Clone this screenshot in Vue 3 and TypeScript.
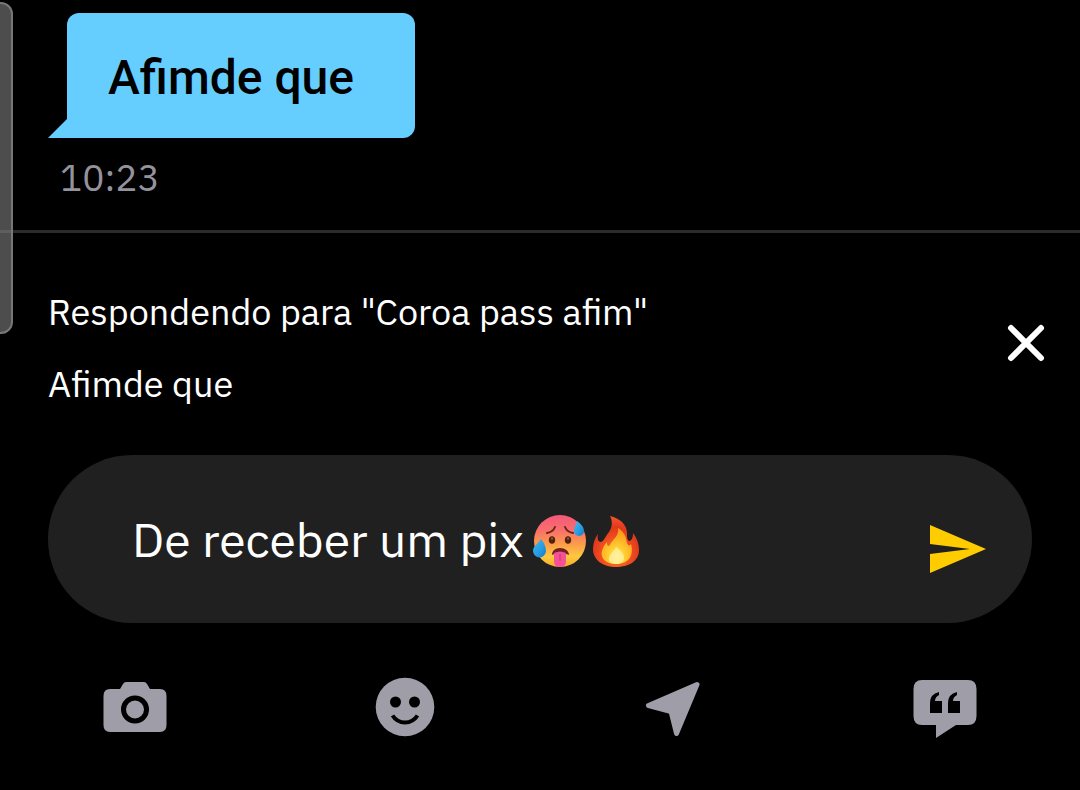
<script setup lang="ts">
import { ref } from 'vue'

const message = ref('Afimde que')
const time = ref('10:23')
const replyTo = ref('Coroa pass afim')
const replying = ref(true)
const draft = ref('De receber um pix')
</script>

<template>
  <main class="chat">
    <div class="scroll-thumb" aria-hidden="true"></div>

    <section class="thread">
      <div class="bubble">
        <svg class="tail" viewBox="0 0 20 20" aria-hidden="true"><path d="M20 0 0 20H20Z" /></svg>
        <p class="message">{{ message }}</p>
      </div>
      <time class="time">{{ time }}</time>
    </section>

    <section v-if="replying" class="reply">
      <div class="reply-text">
        <p>Respondendo para "{{ replyTo }}"</p>
        <p>{{ message }}</p>
      </div>
      <button class="close" type="button" aria-label="Fechar" @click="replying = false">
        <svg width="42" height="42" viewBox="0 0 42 42"><path d="M6 6 36 36M36 6 6 36" fill="none" stroke="#fff" stroke-width="6" stroke-linecap="round" /></svg>
      </button>
    </section>

    <form class="composer" @submit.prevent>
      <div class="field">
        <input v-model="draft" class="draft" type="text" aria-label="Mensagem" />
        <svg class="emoji" width="56" height="56" viewBox="0 0 56 56" role="img" aria-label="🥵">
          <defs>
            <linearGradient id="hot-face" x1="0" y1="0" x2="0" y2="1">
              <stop offset="0" stop-color="#f4587a" />
              <stop offset=".3" stop-color="#f9706b" />
              <stop offset=".55" stop-color="#fb9b4a" />
              <stop offset=".8" stop-color="#fdc940" />
              <stop offset="1" stop-color="#f5a92c" />
            </linearGradient>
            <linearGradient id="hot-drop" x1="0" y1="0" x2="1" y2="1">
              <stop offset="0" stop-color="#45b9ee" />
              <stop offset=".6" stop-color="#269be0" />
              <stop offset="1" stop-color="#1478c8" />
            </linearGradient>
          </defs>
          <circle cx="28" cy="27" r="26" fill="url(#hot-face)" />
          <path d="M15 19q6-1 8-6M33 13q2 5 8 6" fill="none" stroke="#6b2418" stroke-width="2" stroke-linecap="round" />
          <ellipse cx="20" cy="26" rx="3.200" ry="3.800" fill="#54200f" />
          <ellipse cx="36" cy="26" rx="3.200" ry="3.800" fill="#54200f" />
          <circle cx="20" cy="24.500" r="1" fill="#a66a4a" />
          <circle cx="36" cy="24.500" r="1" fill="#a66a4a" />
          <path d="M20 41c0-4 3-7 8-7s9 3 9 7c-4-2-13-2-17 0Z" fill="#702020" />
          <path d="M22 39q6-3 12 0v8q0 6-6 6t-6-6Z" fill="#f55195" />
          <path d="M28 40v7" stroke="#cf2e72" stroke-width="1" />
          <path d="M45 7c4 3 7 6 7 10a5 5 0 0 1-10 0c0-4 2-6 3-10Z" fill="url(#hot-drop)" />
          <path d="M9 25c4 5 5 9 5 12a6 6 0 0 1-13 0c0-5 5-7 8-12Z" fill="url(#hot-drop)" />
        </svg>
        <svg class="emoji" width="56" height="56" viewBox="0 0 56 56" role="img" aria-label="🔥">
          <defs>
            <radialGradient id="fire-outer" cx=".5" cy=".75" r=".7">
              <stop offset="0" stop-color="#ff8a1c" />
              <stop offset=".5" stop-color="#ee4a20" />
              <stop offset=".75" stop-color="#e0381c" />
              <stop offset="1" stop-color="#f0502c" />
            </radialGradient>
            <radialGradient id="fire-inner" cx=".5" cy=".8" r=".7">
              <stop offset="0" stop-color="#fff6a0" />
              <stop offset=".35" stop-color="#ffd234" />
              <stop offset="1" stop-color="#fb9a1a" />
            </radialGradient>
          </defs>
          <path d="M22 2C32 4 39 11 39 19c0 4 0 7 2 8 3 0 4-4 4-8 4 5 6 11 6 17 0 11-10 17-23 17S5 46 5 35c0-6 2-11 5-15-1 5 0 8 3 8 3-1 4-5 8-10 3-4 4-11 1-16Z" fill="url(#fire-outer)" />
          <path d="M30 14c8 5 8 11 9 15 1 3 3 3 4 1 3 11-2 20-15 20-10 0-16-6-14-13 1-4 3-7 5-9 0 5 2 5 4 1 3-5 8-7 7-15Z" fill="url(#fire-inner)" />
          <path d="M28 33c6 4 8 8 8 11 0 4-4 6-8 6-5 0-8-3-7-6 1-5 5-6 7-11Z" fill="#fff0a0" opacity=".8" />
        </svg>
      </div>
      <button class="send" type="submit" aria-label="Enviar">
        <svg width="56" height="48" viewBox="0 0 56 48"><path d="M0 0 56 24 0 48V29L40 24 0 19Z" fill="#ffcc00" /></svg>
      </button>
    </form>

    <nav class="tools">
      <button type="button" aria-label="Câmera">
        <svg width="72" height="72" viewBox="0 0 72 72">
          <path fill-rule="evenodd" d="M27 10H45Q47 10 48 12L51 17H61Q67.500 17 67.500 24V53Q67.500 60 61 60H11Q4.500 60 4.500 53V24Q4.500 17 11 17H21L24 12Q25 10 27 10ZM36 23.500a14 14 0 1 0 0 28 14 14 0 1 0 0-28ZM36 28.500a9 9 0 1 1 0 18 9 9 0 1 1 0-18Z" />
        </svg>
      </button>
      <button type="button" aria-label="Figurinhas">
        <svg width="72" height="72" viewBox="0 0 72 72">
          <circle cx="36" cy="35" r="29.300" />
          <circle cx="26.500" cy="30" r="5.500" fill="#000" />
          <circle cx="45.500" cy="30" r="5.500" fill="#000" />
          <path d="M23.500 43.500Q28 50.500 36 50.500T48.500 43.500" fill="none" stroke="#000" stroke-width="4" />
        </svg>
      </button>
      <button type="button" aria-label="Localização">
        <svg width="72" height="72" viewBox="0 0 72 72">
          <path d="M58 12.500 9.500 33.500 32 39.500 37.500 61.500Z" stroke="#9e9da8" stroke-width="5" stroke-linejoin="round" />
        </svg>
      </button>
      <button type="button" aria-label="Frases">
        <svg width="72" height="72" viewBox="0 0 72 72">
          <path d="M13 8H59Q67.500 8 67.500 17V44Q67.500 53 59 53H47L27 66V53H13Q4.500 53 4.500 44V17Q4.500 8 13 8Z" />
          <path d="M21 41V31Q21 22 30 20V23Q26 25 26 29H33V41ZM39 41V31Q39 22 48 20V23Q44 25 44 29H51V41Z" fill="#000" />
        </svg>
      </button>
    </nav>
  </main>
</template>

<style>
body {
  margin: 0;
  background: #000;
}
</style>

<style scoped>
.chat {
  position: relative;
  min-height: 100vh;
  box-sizing: border-box;
  background: #000;
  color: #fff;
  font-family: "IBM Plex Sans", Roboto, sans-serif;
  font-size: 36px;
  line-height: 48px;
}

p {
  margin: 0;
}

button {
  display: flex;
  padding: 0;
  border: 0;
  background: none;
  cursor: pointer;
}

svg {
  display: block;
}

.scroll-thumb {
  position: absolute;
  top: 2px;
  left: -12px;
  width: 21px;
  height: 328px;
  border: 2px solid #777;
  border-radius: 12px;
  background: rgba(128, 128, 128, 0.6);
}

.thread {
  padding: 13px 48px 29px;
  border-bottom: 3px solid #2c2c2c;
}

.bubble {
  position: relative;
  width: fit-content;
  margin-left: 19px;
  padding: 35px 61px 30px 41px;
  border-radius: 12px 12px 12px 0;
  background: #66ceff;
}

.tail {
  position: absolute;
  right: 100%;
  bottom: 0;
  width: 20px;
  height: 20px;
  margin-right: -1px;
  fill: #66ceff;
}

.message {
  color: #000;
  font-family: Roboto, sans-serif;
  font-size: 48px;
  font-weight: 500;
  line-height: 60px;
}

.time {
  display: block;
  margin: 15px 0 0 12px;
  color: #94939d;
  font-size: 37px;
}

.reply {
  display: flex;
  align-items: flex-start;
  justify-content: space-between;
  padding: 43px 33px 35px 48px;
  line-height: 72px;
}

.close {
  margin-top: 46px;
}

.composer {
  display: flex;
  align-items: center;
  justify-content: space-between;
  min-height: 168px;
  margin: 0 48px;
  padding: 0 46px 0 84px;
  box-sizing: border-box;
  border-radius: 84px;
  background: #202020;
}

.field {
  display: flex;
  flex: 1;
  align-items: center;
  min-width: 0;
}

.draft {
  field-sizing: content;
  min-width: 0;
  margin-right: 8px;
  padding: 0;
  border: 0;
  outline: 0;
  background: none;
  color: #fff;
  font: inherit;
  font-size: 48px;
  line-height: 60px;
}

.emoji {
  margin-top: 6px;
}

.send {
  margin-top: 20px;
}

.tools {
  display: grid;
  grid-template-columns: repeat(4, 1fr);
  justify-items: center;
  padding: 49px 0 46px;
  fill: #9e9da8;
}
</style>
